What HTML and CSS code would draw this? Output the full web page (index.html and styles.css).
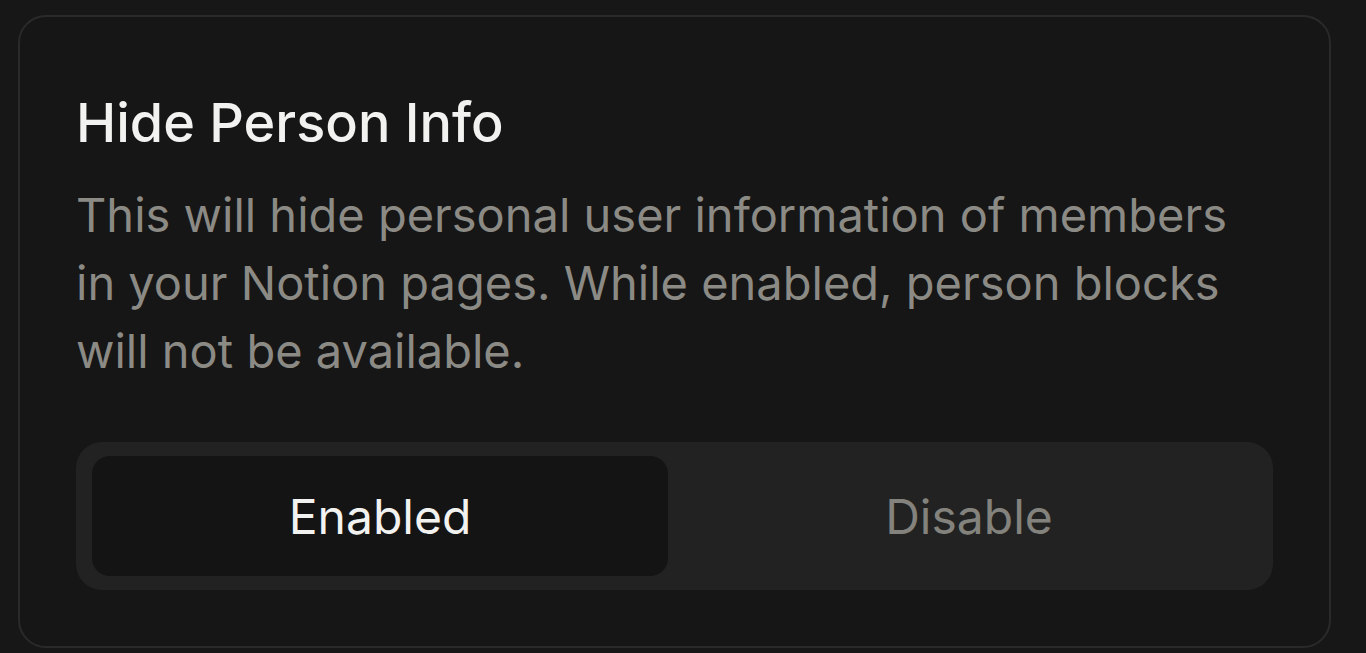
FILE: index.html
```html
<!DOCTYPE html>
<html lang="en">
<head>
<meta charset="utf-8">
<title>Hide Person Info</title>
<link rel="stylesheet" href="styles.css">
</head>
<body>
<div class="card">
  <h2 class="title">Hide Person Info</h2>
  <p class="desc">This will hide personal user information of members in your Notion pages. While enabled, person blocks will not be available.</p>
  <div class="segmented">
    <button class="seg seg-active">Enabled</button>
    <button class="seg">Disable</button>
  </div>
</div>
</body>
</html>
```

FILE: styles.css
```css
html, body {
  margin: 0;
  padding: 0;
  background: #171717;
  height: 100%;
  overflow: hidden;
}
body {
  font-family: Inter, "Noto Sans", sans-serif;
  padding: 15px 35px 0 18px;
  box-sizing: border-box;
}
.card {
  box-sizing: border-box;
  width: 1313px;
  height: 633px;
  border: 2px solid #2a2a2a;
  border-radius: 28px;
  background: #161616;
  padding: 72px 56px 0 56px;
}
.title {
  margin: 0;
  font-size: 54px;
  font-weight: 500;
  line-height: 68px;
  color: #f2f2f0;
  letter-spacing: 0;
}
.desc {
  margin: 24px 0 0 0;
  font-size: 47px;
  line-height: 68px;
  color: #8b8a85;
  font-weight: 400;
}
.segmented {
  margin-top: 57px;
  display: flex;
  gap: 13px;
  padding: 14px 16px;
  background: #222222;
  border-radius: 26px;
  height: 148px;
  box-sizing: border-box;
}
.seg {
  flex: 1;
  border: 0;
  background: transparent;
  border-radius: 18px;
  font-family: inherit;
  font-size: 48px;
  font-weight: 420;
  color: #83827d;
  padding: 0;
}
.seg-active {
  background: #141414;
  color: #f2f2f0;
}
```
